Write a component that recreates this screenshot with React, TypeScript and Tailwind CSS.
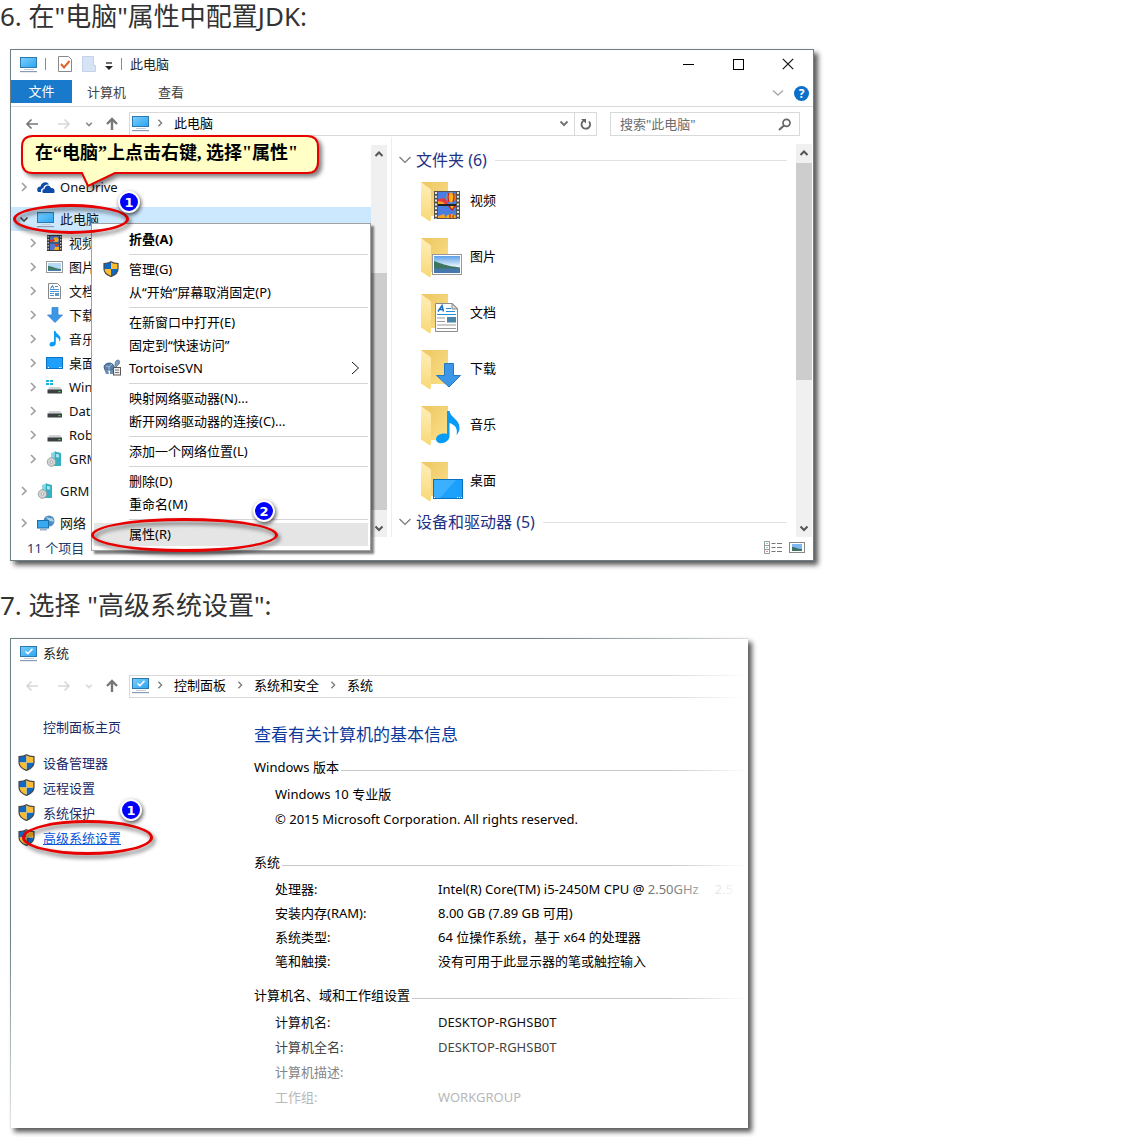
import React from "react";

const FONT = "font-['Noto_Sans','Noto_Sans_CJK_SC',sans-serif]";

/* ---------- icons ---------- */

function Monitor({ check = false }: { check?: boolean }) {
  return (
    <svg width="18" height="17" viewBox="0 0 18 17" className="shrink-0" aria-hidden="true">
      <defs>
        <linearGradient id="scr" x1="0" y1="0" x2="1" y2="1">
          <stop offset="0" stopColor="#7dcfff" />
          <stop offset="1" stopColor="#2aa4f0" />
        </linearGradient>
      </defs>
      <rect x="0.5" y="1.5" width="16" height="10" fill="url(#scr)" stroke="#2a7ab0" />
      <path d="M4 13h10v1H4z" fill="#c3cedb" />
      <path d="M0 15h17v1.2H0z" fill="#8a9cb5" />
      {check && <path d="M5.5 6.5l2.4 2.2 4.6-5" fill="none" stroke="#fff" strokeWidth="1.6" />}
    </svg>
  );
}

function Shield({ size = 16 }: { size?: number }) {
  const d = "M8 .7C6 2 3.600 2.500 1 2.500V8c0 3.600 3 6 7 7.500 4-1.500 7-3.900 7-7.500V2.500C12.400 2.500 10 2 8 .7z";
  return (
    <svg width={size} height={size} viewBox="0 0 16 16" className="shrink-0" aria-hidden="true">
      <clipPath id="shieldclip">
        <path d={d} />
      </clipPath>
      <g clipPath="url(#shieldclip)">
        <path d="M0 0h8v8H0zM8 8h8v8H8z" fill="#0f68c2" />
        <path d="M8 0h8v8H8zM0 8h8v8H0z" fill="#fdbd2e" />
      </g>
      <path d={d} fill="none" stroke="#45484d" strokeWidth="1.2" />
    </svg>
  );
}

function Chevron({ dir, className, w = 2 }: { dir: "up" | "down" | "right"; className?: string; w?: number }) {
  const d = { up: "M1.500 7L5 3.500 8.500 7", down: "M1.500 3.500L5 7l3.500-3.500", right: "M3 1l4 4-4 4" }[dir];
  return (
    <svg width="10" height="10" viewBox="0 0 10 10" className={className} aria-hidden="true">
      <path d={d} fill="none" stroke="currentColor" strokeWidth={w} />
    </svg>
  );
}

function Arrow({ dir, className }: { dir: "left" | "right" | "up"; className: string }) {
  const d = {
    left: "M13 7H2M6.500 2.500L2 7l4.500 4.500",
    right: "M1 7h11M7.500 2.500L12 7l-4.500 4.500",
    up: "M7 13V2.500M2 7l5-5 5 5",
  }[dir];
  return (
    <svg width="14" height="14" viewBox="0 0 14 14" className={className} aria-hidden="true">
      <path d={d} fill="none" stroke="currentColor" strokeWidth={dir === "up" ? 2.4 : 1.7} />
    </svg>
  );
}

type Kind = "cloud" | "pc" | "video" | "picture" | "doc" | "down" | "music" | "desktop" | "windrive" | "drive" | "dvd" | "net";

function SmallIcon({ kind }: { kind: Kind }) {
  if (kind === "pc") return <Monitor />;
  return (
    <svg width="18" height="16" viewBox="0 0 18 16" className="shrink-0" aria-hidden="true">
      {kind === "cloud" && (
        <>
          <path d="M1 13c-2-3 0-5.500 2.500-5.500.5-4.500 6.500-6 8.500-2-3-.5-5.500 1-5.500 3.500-2 .5-3 2-2.500 4z" fill="#0d4ba8" />
          <path d="M6 14c-1.500-2 0-4 1.500-4C8 6 12.500 5 14 9c2.500-.3 4 1.500 3.500 3.500 0 1-.5 1.500-1 1.500z" fill="#0d4ba8" />
        </>
      )}
      {kind === "video" && (
        <>
          <rect x="1" y="0" width="15" height="16" fill="#3a3a3c" />
          <rect x="4" y="1" width="9" height="6.500" fill="#4b7bd0" />
          <rect x="4" y="8.500" width="9" height="6.500" fill="#4b7bd0" />
          <circle cx="10" cy="4.500" r="2.500" fill="#f4b31c" />
          <path d="M4 5l4-1 1 2-5 1zM8 9h5l-2 3z" fill="#d63326" />
          <path d="M9 12h4v3H8z" fill="#f4b31c" />
          <path d="M2.200 1v14M14.700 1v14" stroke="#ddd" strokeWidth="1.200" strokeDasharray="1.500 1.500" />
        </>
      )}
      {kind === "picture" && (
        <>
          <rect x="0.5" y="2.500" width="16" height="11" fill="#fff" stroke="#999" />
          <rect x="2" y="4" width="13" height="8" fill="#b4daf5" />
          <path d="M2 7c4 0 6 2.500 13 3V12H2z" fill="#3f7a68" />
          <path d="M2 10.800h13V12H2z" fill="#4a7fae" />
        </>
      )}
      {kind === "doc" && (
        <>
          <path d="M2.500.5h9l3 3v12h-12z" fill="#fff" stroke="#888" />
          <path d="M4 6.500h9M4 8.500h9M4 10.500h4M4 12.500h4M9 3.500h3" stroke="#4b92cf" />
          <path d="M4.500 5.500l2-3 1.200 3" stroke="#1c76c4" fill="none" />
          <rect x="9" y="10" width="4" height="3" fill="#5b9bc9" />
        </>
      )}
      {kind === "down" && <path d="M6 .5h6V8h4.500L9 15.500 1.500 8H6z" fill="#3d96e6" stroke="#2a7fcf" strokeWidth=".7" />}
      {kind === "music" && (
        <path d="M8 0h1.500c.5 3 5 4 5 7.500 0 1.500-.8 2.800-1.500 3.500.8-2.500-.5-4.500-3.200-5V12.500c0 3-6.300 4.500-6.300 1 0-2 2.500-3.200 4.500-2.500z" fill="#0a9df5" />
      )}
      {kind === "desktop" && (
        <>
          <rect x="0.500" y="2.500" width="16" height="11" fill="#1e9ffb" stroke="#0a74c2" />
          <path d="M2 12.500h1M13 12.500h3" stroke="#fff" strokeDasharray="1 .5" />
        </>
      )}
      {kind === "windrive" && <path d="M0 1h3v2H0zM4 1h3v2H4zM0 4h3v2H0zM4 4h3v2H4z" fill="#17b1e7" />}
      {(kind === "windrive" || kind === "drive") && (
        <>
          <path d="M3.500 8h10.500l2 3H1.500z" fill="#cfd3d6" />
          <rect x="1.500" y="10.500" width="14.500" height="4" fill="#3c4043" />
          <rect x="12.500" y="12" width="2" height="1.200" fill="#3fe04a" />
        </>
      )}
      {kind === "dvd" && (
        <>
          <path d="M5 2l5-2v14l-5 1z" fill="#8fd6e4" />
          <path d="M9 .5l6 1.500v13H8z" fill="#37afc2" />
          <path d="M10 3l3 .5v3l-3-.3z" fill="#a9e4ef" />
          <circle cx="5.500" cy="11" r="4.300" fill="#d2d4d6" stroke="#8c8f92" strokeWidth=".8" />
          <circle cx="5.500" cy="11" r="1.300" fill="#fff" stroke="#888" strokeWidth=".6" />
        </>
      )}
      {kind === "net" && (
        <>
          <circle cx="12" cy="6" r="5.500" fill="#4d8fc2" />
          <path d="M9 2c3 0 3 2 6 1l2 3c-2 2-3-1-5 0z" fill="#a9cfe8" />
          <rect x="0.500" y="5.500" width="11" height="7.500" fill="#38aaf2" stroke="#1d6fa8" />
          <path d="M3 14.800h7" stroke="#8a9cb5" strokeWidth="1.200" />
        </>
      )}
    </svg>
  );
}

function FolderIcon({ kind }: { kind: Kind }) {
  return (
    <svg width="44" height="42" viewBox="0 0 44 42" className="mt-1 shrink-0" aria-hidden="true">
      <defs>
        <linearGradient id="fback" x1="0" y1="0" x2="1" y2="1">
          <stop offset="0" stopColor="#ecc661" />
          <stop offset="1" stopColor="#fbe08a" />
        </linearGradient>
        <linearGradient id="ffront" x1="0" y1="0" x2="0" y2="1">
          <stop offset="0" stopColor="#ffefb8" />
          <stop offset="1" stopColor="#f8d878" />
        </linearGradient>
        <linearGradient id="sky" x1="0" y1="0" x2="0" y2="1">
          <stop offset="0" stopColor="#5c9fe8" />
          <stop offset="0.6" stopColor="#e4f2fc" />
        </linearGradient>
        <clipPath id="film">
          <path d="M18 11h18v12H18zM18 25h18v12H18z" />
        </clipPath>
      </defs>
      <path d="M1 1h27v34H1z" fill="url(#fback)" />
      <path d="M1 1l8 6q2 1 2 3v28.500l-1 2-9-6z" fill="url(#ffront)" />
      {kind === "video" && (
        <>
          <rect x="14" y="10" width="26" height="28" fill="#55524e" />
          <g clipPath="url(#film)">
            <rect x="18" y="11" width="18" height="26" fill="#4a7de0" />
            <path d="M18 18l6-1 3 3 1 3H18z" fill="#e33b46" />
            <path d="M18 20l5 1 2 2h-7z" fill="#f5a020" />
            <ellipse cx="31" cy="16.500" rx="4.500" ry="5" fill="#f6b51c" />
            <path d="M29 12q-2 4 0 9M33 12q2 4 0 9" stroke="#d4281f" strokeWidth="1.500" fill="none" />
            <path d="M28 25h8l-4 5z" fill="#c8201e" />
            <path d="M30 25h4l-2 3z" fill="#f6b51c" />
            <ellipse cx="31" cy="37" rx="5" ry="4" fill="#f6b51c" />
            <path d="M18 35l6-2 2 4h-8z" fill="#f5a020" />
            <path d="M30 33v4M33 34v3" stroke="#d4281f" strokeWidth="1.300" />
          </g>
          <path d="M16 11v27M38 11v27" stroke="#e8e8e8" strokeWidth="2" strokeDasharray="2 1.800" />
          <path d="M18 24h18" stroke="#222" strokeWidth="2" />
        </>
      )}
      {kind === "picture" && (
        <>
          <rect x="12.500" y="17.500" width="29" height="20" fill="#fff" stroke="#999" />
          <rect x="14" y="19" width="26" height="17" fill="url(#sky)" />
          <path d="M14 24c6 2 12 5 26 6.500V32H14z" fill="#3c7560" />
          <path d="M14 31.500h26V36H14z" fill="#4579ad" />
        </>
      )}
      {kind === "doc" && (
        <>
          <path d="M15.500 10.500h17l5 5v23h-22z" fill="#fff" stroke="#8a8a8a" />
          <path d="M32 10.500v5.500h5.500z" fill="#ddd" stroke="#8a8a8a" />
          <path d="M18 18.500l4-6 1.500 6M20 16.500h3.500" stroke="#1a6dbd" strokeWidth="1.500" fill="none" />
          <path d="M26 15.500h5M26 18.500h9M17 21.500h19" stroke="#2090d8" strokeWidth="1.200" />
          <path d="M17 25h8M17 28.500h8M17 32h19M17 35.500h19" stroke="#999" />
          <rect x="27" y="24" width="9" height="5.500" fill="#4a86a8" />
        </>
      )}
      {kind === "down" && <path d="M24.500 14.500h9v12h7L29 38 16.500 26.500h8z" fill="#3d96e6" stroke="#2478c4" />}
      {kind === "music" && (
        <path d="M27 6h2.500c1 7 10 8 10 17 0 3-1.500 5.500-3 7 1.500-6-1-10-7-12v13c0 8-13.500 9.500-13.500 3.500 0-4.500 6-7 11-5.500z" fill="#079bf5" />
      )}
      {kind === "desktop" && (
        <>
          <rect x="13.500" y="18.500" width="29" height="19" fill="#1ba0fb" stroke="#0a72bd" />
          <path d="M14 19h22L20 37h-6z" fill="#3bb0ff" />
          <path d="M14 36.500h2M37 36.500h5" stroke="#fff" strokeDasharray="1 1" />
        </>
      )}
    </svg>
  );
}

function Tortoise() {
  return (
    <svg width="18" height="17" viewBox="0 0 18 17" className="shrink-0" aria-hidden="true">
      <path d="M1 8c0-4 8-6 10-1l1 4H2z" fill="#5a7fa8" stroke="#35506f" strokeWidth=".8" />
      <path d="M3 7l3 1 3-3M6 8v3" stroke="#a8c4de" strokeWidth=".9" fill="none" />
      <path d="M12 6c0-3 1-5 3-5s2 3 1 4l-3 3z" fill="#7f9dbd" stroke="#4a6684" strokeWidth=".7" />
      <path d="M1 10l2 5h3l-1-4zM7 11h3v4H7z" fill="#6d8dae" />
      <rect x="10.500" y="8.500" width="7" height="7.500" fill="#eee" stroke="#5d5552" />
      <path d="M12 11h4M12 13.500h4" stroke="#777" />
    </svg>
  );
}

/* ---------- annotations ---------- */

function Badge({ n, className }: { n: number; className: string }) {
  return (
    <span
      className={`absolute flex size-[22px] items-center justify-center rounded-full border-2 border-white bg-[#0000ff] font-['DejaVu_Sans',sans-serif] text-[13px] leading-none font-bold text-white shadow-[1px_2px_4px_rgba(0,0,0,0.7)] ${className}`}
    >
      {n}
    </span>
  );
}

function Ring({ className }: { className: string }) {
  return (
    <span
      className={`pointer-events-none absolute rounded-[50%] border-[3px] border-[#e80000] drop-shadow-[2px_3px_2px_rgba(0,0,0,0.6)] ${className}`}
    />
  );
}

function Callout() {
  return (
    <div className="pointer-events-none absolute top-[84px] left-[10px] h-[56px] w-[304px]">
      <svg width="304" height="56" viewBox="0 0 304 56" className="absolute inset-0 drop-shadow-[3px_3px_2px_rgba(0,0,0,0.5)]" aria-hidden="true">
        <path
          d="M12 2H286q11 0 11 11V28q0 11-11 11H94L67 52 61 39H12Q1 39 1 28V13Q1 2 12 2z"
          fill="#ffffc6"
          stroke="#e80000"
          strokeWidth="2"
        />
      </svg>
      <p className="relative pt-[7px] pl-[14px] font-['Liberation_Serif','Noto_Sans_CJK_SC',serif] text-[18px] leading-6 font-bold whitespace-nowrap text-black">
        在“电脑”上点击右键, 选择"属性"
      </p>
    </div>
  );
}

/* ---------- explorer window ---------- */

type Node = { label: string; kind: Kind; level: 0 | 1; gap?: boolean; open?: boolean };

const TREE: Node[] = [
  { label: "OneDrive", kind: "cloud", level: 0 },
  { label: "此电脑", kind: "pc", level: 0, gap: true, open: true },
  { label: "视频", kind: "video", level: 1 },
  { label: "图片", kind: "picture", level: 1 },
  { label: "文档", kind: "doc", level: 1 },
  { label: "下载", kind: "down", level: 1 },
  { label: "音乐", kind: "music", level: 1 },
  { label: "桌面", kind: "desktop", level: 1 },
  { label: "Windows (C:)", kind: "windrive", level: 1 },
  { label: "Data (D:)", kind: "drive", level: 1 },
  { label: "Rob (E:)", kind: "drive", level: 1 },
  { label: "GRM", kind: "dvd", level: 1 },
  { label: "GRM", kind: "dvd", level: 0, gap: true },
  { label: "网络", kind: "net", level: 0, gap: true },
];

const FOLDERS: { label: string; kind: Kind }[] = [
  { label: "视频", kind: "video" },
  { label: "图片", kind: "picture" },
  { label: "文档", kind: "doc" },
  { label: "下载", kind: "down" },
  { label: "音乐", kind: "music" },
  { label: "桌面", kind: "desktop" },
];

type Item = { label: string; bold?: boolean; icon?: React.ReactNode; sub?: boolean; active?: boolean };

const MENU: Item[][] = [
  [{ label: "折叠(A)", bold: true }],
  [{ label: "管理(G)", icon: <Shield size={16} /> }, { label: "从“开始”屏幕取消固定(P)" }],
  [{ label: "在新窗口中打开(E)" }, { label: "固定到“快速访问”" }, { label: "TortoiseSVN", icon: <Tortoise />, sub: true }],
  [{ label: "映射网络驱动器(N)..." }, { label: "断开网络驱动器的连接(C)..." }],
  [{ label: "添加一个网络位置(L)" }],
  [{ label: "删除(D)" }, { label: "重命名(M)" }],
  [{ label: "属性(R)", active: true }],
];

function ContextMenu() {
  return (
    <div
      role="menu"
      className="absolute top-[173px] left-[80px] w-[280px] border border-[#a0a0a0] bg-white py-1 pr-0.5 pl-0.5 text-black shadow-[3px_3px_2px_rgba(0,0,0,0.5)]"
    >
      {MENU.map((group, g) => (
        <div key={g} role="group">
          {g > 0 && <hr className="my-[3px] ml-[35px] border-[#d4d4d4]" />}
          {group.map((it) => (
            <button
              key={it.label}
              role="menuitem"
              className={`flex h-[23px] w-full items-center pb-0.5 text-left ${it.active ? "bg-[#e5e5e5]" : ""} ${it.bold ? "font-bold" : ""}`}
            >
              <span className="flex w-[35px] shrink-0 items-center pl-[9px]">{it.icon}</span>
              <span className="flex-1 whitespace-nowrap">{it.label}</span>
              {it.sub && (
                <svg width="9" height="14" viewBox="0 0 9 14" className="mr-2" aria-hidden="true">
                  <path d="M1 1l6.500 6L1 13" fill="none" stroke="#111" />
                </svg>
              )}
            </button>
          ))}
        </div>
      ))}
    </div>
  );
}

function ScrollBar({ className, before, thumb }: { className: string; before: string; thumb: string }) {
  return (
    <div className={`flex w-4 shrink-0 flex-col bg-[#f0f0f0] text-[#555] ${className}`}>
      <button aria-label="向上滚动" className="flex h-[18px] items-center justify-center">
        <Chevron dir="up" />
      </button>
      <div className={before} />
      <div className={`bg-[#cdcdcd] ${thumb}`} />
      <button aria-label="向下滚动" className="mt-auto flex h-[18px] items-center justify-center">
        <Chevron dir="down" />
      </button>
    </div>
  );
}

function GroupHeader({ children }: { children: React.ReactNode }) {
  return (
    <h3 className="flex h-6 items-center pr-[9px] pl-[7px] text-[16px] leading-6 text-[#1e3287]">
      <svg width="12" height="8" viewBox="0 0 12 8" className="mr-[5px]" aria-hidden="true">
        <path d="M.5 1L6 6.500 11.500 1" fill="none" stroke="#777" strokeWidth="1.200" />
      </svg>
      {children}
      <span className="ml-2 h-px flex-1 bg-[#e2e2e2]" />
    </h3>
  );
}

function NavButtons({ dim = false }: { dim?: boolean }) {
  return (
    <div className="flex shrink-0 items-center pl-[14px]">
      <button aria-label="后退" className="mr-[18px]">
        <Arrow dir="left" className={dim ? "text-[#d8d8d8]" : "text-[#777]"} />
      </button>
      <button aria-label="前进" className="mr-[14px]">
        <Arrow dir="right" className="text-[#d8d8d8]" />
      </button>
      <button aria-label="最近浏览的位置" className="mr-3">
        <Chevron dir="down" className={`size-2 ${dim ? "text-[#d8d8d8]" : "text-[#888]"}`} />
      </button>
      <button aria-label="上移" className="mr-[10px]">
        <Arrow dir="up" className="text-[#777]" />
      </button>
    </div>
  );
}

function ExplorerWindow() {
  return (
    <section className="relative mr-4 ml-[10px] max-w-[804px] border border-[#6d7f83] bg-white shadow-[4px_4px_5px_rgba(0,0,0,0.65)]">
      <header className="flex h-[30px] items-center pb-0.5 pl-[9px]">
        <Monitor />
        <span className="ml-[7px] h-3 w-px bg-[#8a8a8a]" />
        <svg width="14" height="16" viewBox="0 0 14 16" className="ml-3" aria-hidden="true">
          <path d="M.5.5h10l3 3v12H.5z" fill="#fff" stroke="#888" />
          <path d="M3 8l3 3.500L11.500 5" fill="none" stroke="#e2622a" strokeWidth="2" />
        </svg>
        <svg width="14" height="16" viewBox="0 0 14 16" className="ml-[10px]" aria-hidden="true">
          <path d="M.5.5h11v9h2v6H.5z" fill="#d8e4f5" stroke="#c3d3ea" />
        </svg>
        <svg width="8" height="8" viewBox="0 0 8 8" className="mt-[3px] ml-[9px]" aria-hidden="true">
          <path d="M1 1h6" stroke="#222" strokeWidth="1.300" />
          <path d="M0 4h8L4 8z" fill="#222" />
        </svg>
        <span className="ml-2 h-3 w-px bg-[#8a8a8a]" />
        <h2 className="ml-2 flex-1 text-[#222]">此电脑</h2>
        <button aria-label="最小化" className="flex h-full w-[49px] items-center justify-center">
          <span className="h-px w-[11px] bg-black" />
        </button>
        <button aria-label="最大化" className="flex h-full w-[50px] items-center justify-center">
          <span className="size-[11px] border border-black" />
        </button>
        <button aria-label="关闭" className="flex h-full w-[50px] items-center justify-center">
          <svg width="12" height="12" viewBox="0 0 12 12" aria-hidden="true">
            <path d="M.8.8l10.400 10.400M11.200.8L.8 11.200" stroke="#111" strokeWidth="1.200" />
          </svg>
        </button>
      </header>

      <nav className="flex h-[27px] items-start border-b border-[#d9dadb] text-[#444]">
        <button className="h-[23px] w-[61px] bg-[#1979ca] pb-0.5 text-white">文件</button>
        <button className="ml-[15px] h-[23px]">计算机</button>
        <button className="ml-8 h-[23px]">查看</button>
        <span className="flex-1" />
        <button aria-label="展开功能区" className="mr-[10px] flex h-[26px] items-center">
          <svg width="12" height="8" viewBox="0 0 12 8" aria-hidden="true">
            <path d="M1 1.500l5 4.500 5-4.500" fill="none" stroke="#aaa" strokeWidth="1.400" />
          </svg>
        </button>
        <button aria-label="帮助" className="mt-[6px] mr-[4px] flex size-[15px] items-center justify-center rounded-full bg-[#0c6fca] text-[12px] leading-none font-bold text-white">
          ?
        </button>
      </nav>

      <div className="flex h-[30px] items-center pt-[4px] pr-[13px]">
        <NavButtons />
        <div className="flex h-6 min-w-0 flex-1 items-center border border-[#d9d9d9] pb-0.5 pl-[2px] text-black">
          <Monitor />
          <Chevron dir="right" w={1.6} className="mr-[10px] ml-[6px] h-2 w-2 text-[#777]" />
          <span className="flex-1">此电脑</span>
          <button aria-label="以前的位置" className="mr-[5px]">
            <Chevron dir="down" className="text-[#777]" />
          </button>
          <button aria-label="刷新" className="-mb-0.5 flex h-[22px] w-[22px] items-center justify-center border-l border-[#d9d9d9]">
            <svg width="12" height="12" viewBox="0 0 12 12" aria-hidden="true">
              <path d="M9 3.500A4.300 4.300 0 1 1 3.500 2.800" fill="none" stroke="#666" strokeWidth="1.800" />
              <path d="M1 1h5v4.500z" fill="#666" />
            </svg>
          </button>
        </div>
        <div className="ml-[13px] flex h-6 w-[190px] items-center border border-[#d9d9d9] pr-[7px] pl-[9px]">
          <input
            type="text"
            aria-label="搜索"
            placeholder={'搜索"此电脑"'}
            className="min-w-0 flex-1 bg-transparent outline-none placeholder:text-[#6d6d6d]"
          />
          <svg width="14" height="13" viewBox="0 0 14 13" aria-hidden="true">
            <circle cx="8.500" cy="4.800" r="3.500" fill="none" stroke="#666" strokeWidth="1.700" />
            <path d="M6 7.500L1 12" stroke="#666" strokeWidth="2" />
          </svg>
        </div>
      </div>

      <div className="flex">
        <ul className="w-[360px] shrink-0 pt-[38px] pb-[2px] text-[#111]">
          {TREE.map((n, i) => (
            <li key={i} className={n.gap ? "mt-2" : ""}>
              <button
                className={`flex h-6 w-full items-center text-left ${n.level ? "pl-[17px]" : "pl-2"} ${n.open ? "bg-[#cce8ff]" : ""}`}
              >
                <Chevron dir={n.open ? "down" : "right"} w={1.7} className={n.open ? "text-[#444]" : "text-[#a0a0a0]"} />
                <span className="mr-[5px] ml-2 flex">
                  <SmallIcon kind={n.kind} />
                </span>
                {n.label}
              </button>
            </li>
          ))}
        </ul>
        <ScrollBar className="mt-2" before="h-[110px]" thumb="h-[237px]" />
        <div className="ml-[4px] min-w-0 flex-1 border-l border-[#eee] pt-[11px] text-black">
          <GroupHeader>文件夹 (6)</GroupHeader>
          <ul className="pb-0.5">
            {FOLDERS.map((f) => (
              <li key={f.kind}>
                <button className="flex h-14 items-center pl-[28px] text-left">
                  <FolderIcon kind={f.kind} />
                  <span className="ml-[6px]">{f.label}</span>
                </button>
              </li>
            ))}
          </ul>
          <GroupHeader>设备和驱动器 (5)</GroupHeader>
        </div>
        <ScrollBar className="mt-[7px] mr-px" before="h-px" thumb="h-[217px]" />
      </div>

      <footer className="flex h-[23px] items-center pr-2 pb-0.5 pl-4 text-[#1e3a6b]">
        <span className="flex-1">11 个项目</span>
        <button aria-label="详细信息">
          <svg width="19" height="13" viewBox="0 0 19 13" aria-hidden="true">
            <path d="M.5.500h5v12h-5zM.5 4.500h5M.5 8.500h5" fill="none" stroke="#999" />
            <path d="M7.500 2.500h4M13 2.500h5M7.500 6.500h4M13 6.500h5M7.500 10.500h4M13 10.500h5" stroke="#777" />
            <path d="M2.500 2.500h1M2.500 6.500h1" stroke="#2a7" />
            <path d="M2.500 10.500h1" stroke="#c22" />
          </svg>
        </button>
        <button aria-label="大图标" className="ml-[6px]">
          <svg width="16" height="11" viewBox="0 0 16 11" aria-hidden="true">
            <rect x=".5" y=".5" width="15" height="10" fill="#fff" stroke="#888" />
            <rect x="3" y="2" width="10" height="7" fill="#7db8f2" />
            <path d="M3 5c4 0 5 2 10 2v2H3z" fill="#3d7468" />
          </svg>
        </button>
      </footer>

      <ContextMenu />
      <Callout />
      <Ring className="top-[154px] left-[2px] h-[30px] w-[116px]" />
      <Badge n={1} className="top-[141px] left-[107px]" />
      <Ring className="top-[468px] left-[80px] h-[34px] w-[187px]" />
      <Badge n={2} className="top-[450px] left-[242px]" />
    </section>
  );
}

/* ---------- system window ---------- */

const LINKS = ["设备管理器", "远程设置", "系统保护", "高级系统设置"];

function SectionTitle({ children }: { children: React.ReactNode }) {
  return (
    <h3 className="flex h-5 items-center leading-5 text-black">
      {children}
      <span className="mt-[6px] ml-0.5 h-px flex-1 bg-[#c8c8c8]" />
    </h3>
  );
}

function Row({ name, value, className }: { name: string; value?: React.ReactNode; className: string }) {
  return (
    <div className={`flex items-center ${className}`}>
      <dt className="w-[163px] shrink-0">{name}</dt>
      <dd className="whitespace-nowrap">{value}</dd>
    </div>
  );
}

function SystemWindow() {
  return (
    <section className="relative mr-4 ml-[10px] max-w-[738px] bg-white shadow-[4px_4px_5px_rgba(0,0,0,0.65)]">
      <span className="absolute inset-x-0 top-0 h-px bg-linear-to-r from-[#6d7f83] from-70% to-[#d8dcdd]" />
      <span className="absolute inset-y-0 left-0 w-px bg-linear-to-b from-[#6d7f83] from-60% to-[#e4e8e8]" />
      <header className="flex h-8 items-center pb-0.5 pl-[10px] text-[#222]">
        <Monitor check />
        <h2 className="ml-[5px]">系统</h2>
      </header>
      <div className="flex h-8 items-center pl-px">
        <NavButtons dim />
        <div className="flex h-[23px] min-w-0 flex-1 items-center border-y border-l border-[#d9d9d9] pb-0.5 pl-[2px] text-black">
          <Monitor check />
          {["控制面板", "系统和安全", "系统"].map((c) => (
            <React.Fragment key={c}>
              <Chevron dir="right" w={1.6} className="mr-[10px] ml-[6px] h-2 w-2 text-[#777]" />
              <a href="#" className="mr-1">{c}</a>
            </React.Fragment>
          ))}
        </div>
      </div>

      <div className="flex overflow-hidden pb-[19px]">
        <aside className="w-[244px] shrink-0 pt-[15px] text-[#1a2a66]">
          <a href="#" className="block pl-[33px] leading-5">
            控制面板主页
          </a>
          <ul className="pt-[13px]">
            {LINKS.map((l, i) => (
              <li key={l} className="flex h-[25px] items-center pl-2">
                <Shield size={17} />
                <a href="#" className={`ml-2 ${i === 3 ? "text-[#0b57d8] underline" : ""}`}>
                  {l}
                </a>
              </li>
            ))}
          </ul>
        </aside>
        <main className="min-w-0 flex-1 pt-[21px]">
          <h2 className="text-[17px] leading-6 text-[#0b3a9c]">查看有关计算机的基本信息</h2>
          <div className="pt-[10px]">
            <SectionTitle>Windows 版本</SectionTitle>
          </div>
          <div className="pt-[5px] pl-[21px] leading-[25px] text-black">
            <p>Windows 10 专业版</p>
            <p className="whitespace-nowrap">© 2015 Microsoft Corporation. All rights reserved.</p>
          </div>
          <div className="pt-5">
            <SectionTitle>系统</SectionTitle>
          </div>
          <dl className="pt-[5px] pl-[21px]">
            <Row
              name="处理器:"
              className="h-6 text-black"
              value={
                <>
                  Intel(R) Core(TM) i5-2450M CPU @ <span className="text-[#777]">2.50GHz</span>
                  <span className="ml-4 text-[#bbb]">2.5</span>
                </>
              }
            />
            <Row name="安装内存(RAM):" className="h-6 text-black" value="8.00 GB (7.89 GB 可用)" />
            <Row name="系统类型:" className="h-6 text-black" value="64 位操作系统，基于 x64 的处理器" />
            <Row name="笔和触摸:" className="h-6 text-black" value="没有可用于此显示器的笔或触控输入" />
          </dl>
          <div className="pt-3">
            <SectionTitle>计算机名、域和工作组设置</SectionTitle>
          </div>
          <dl className="pt-1 pl-[21px]">
            <Row name="计算机名:" className="h-[25px] text-[#111]" value="DESKTOP-RGHSB0T" />
            <Row name="计算机全名:" className="h-[25px] text-[#444]" value="DESKTOP-RGHSB0T" />
            <Row name="计算机描述:" className="h-[25px] text-[#858585]" />
            <Row name="工作组:" className="h-[25px] text-[#b8b8b8]" value="WORKGROUP" />
          </dl>
        </main>
      </div>
      <span className="pointer-events-none absolute inset-y-px right-0 w-20 bg-linear-to-r from-transparent to-white" />
      <Ring className="top-[182px] left-[12px] h-[35px] w-[131px]" />
      <Badge n={1} className="top-[161px] left-[110px]" />
    </section>
  );
}

export default function App() {
  return (
    <div className={`bg-white pb-[9px] text-[13px] leading-5 ${FONT}`}>
      <h1 className="mb-[15px] h-[34px] text-[26px] leading-8 whitespace-nowrap text-[#333]">6. 在"电脑"属性中配置JDK:</h1>
      <ExplorerWindow />
      <h1 className="mt-7 mb-[15px] h-[34px] text-[26px] leading-8 whitespace-nowrap text-[#333]">7. 选择 "高级系统设置":</h1>
      <SystemWindow />
    </div>
  );
}
